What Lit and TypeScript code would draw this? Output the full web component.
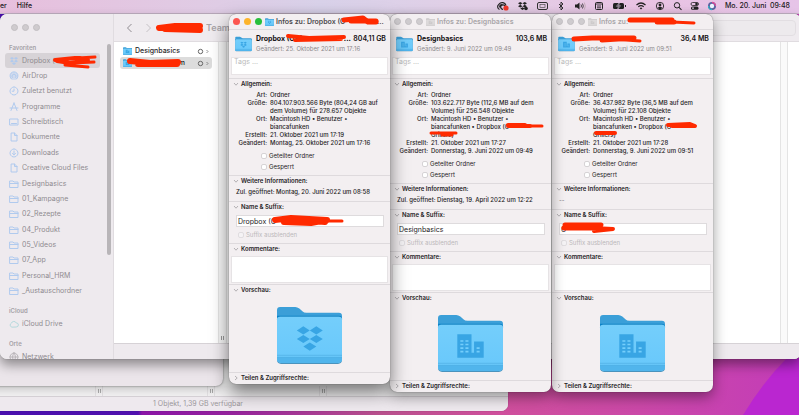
import { LitElement, html, svg, css, nothing } from "lit";
import { customElement, property } from "lit/decorators.js";
import { classMap } from "lit/directives/class-map.js";

const boxDiamonds = svg`<path d="M5 0L10 3L5 6L0 3ZM15 0L20 3L15 6L10 3ZM5 6.4L10 9.4L5 12.4L0 9.4ZM15 6.4L20 9.4L15 12.4L10 9.4ZM10 12L15 15L10 18L5 15Z"/>`;

const folderArt = (kind: string) => svg`
  <defs>
    <linearGradient id="front" x1="0" y1="0" x2="0" y2="1">
      <stop offset="0" stop-color="#74cefb"/><stop offset="1" stop-color="#68c8fb"/>
    </linearGradient>
  </defs>
  <path d="M1 14V4Q1 1 4 1H19Q21 1 23 2.500L26 5Q27.500 6.500 30 6.500H62Q65 6.500 65 9.500V14Z" fill="#3b9fd8"/>
  <path d="M1 16V9.500H62Q65 9.500 65 12V18Z" fill="#0b83c8"/>
  <path d="M1 13Q1 10.500 4 10.500H62Q65 10.500 65 13V53Q65 57 61 57H5Q1 57 1 53Z" fill="#4a93bd"/>
  <path d="M1 13Q1 10.500 4 10.500H62Q65 10.500 65 13V52Q65 56 61 56H5Q1 56 1 52Z" fill="url(#front)"/>
  <path d="M1 50.500H65V52Q65 56 61 56H5Q1 56 1 52Z" fill="#51b5ec"/>
  <path d="M1 48.500H65M1 50.500H65" stroke="#4aa9df" stroke-width=".6"/>
  ${kind === "dropbox"
    ? svg`<g transform="translate(20.500 20) scale(1.280 1.330)" fill="#38a5e4">${boxDiamonds}</g>`
    : svg`<path d="M20 20H34V38H36.500V27H46V43H20Z" fill="#38a5e4"/>
        <path d="M23 26.500H26M28 26.500H31M23 30H26M28 30H31M23 33.500H26M28 33.500H31M23 37H26M28 37H31M39 33.500H42M39 37H42" stroke="#74cefb" stroke-width="1.600"/>`}`;

const folder = (kind: string, cls: string) =>
  html`<svg class=${cls} viewBox="0 0 66 58" aria-hidden="true">${folderArt(kind)}</svg>`;

const chevron = (open: boolean) => html`<svg class="chev" viewBox="0 0 6 6" aria-hidden="true">
  <path d=${open ? "M1 2L3 4.200L5 2" : "M2 1L4.200 3L2 5"} fill="none" stroke="#a5a2a5" stroke-width=".8"/></svg>`;

interface Stroke { d: string; w: number; }
const scribble = (strokes: Stroke[]) => html`<svg class="ink" aria-hidden="true">
  ${strokes.map((s) => svg`<path d=${s.d} stroke-width=${s.w} fill="none" stroke="#ff2a00" stroke-linecap="round" stroke-linejoin="round"/>`)}</svg>`;

interface Info {
  id: string; kind: string; title: string; name: string; size: string; changed: string;
  bytes: string; place: string; created: string; changedLong: string; opened: string;
  field: string; active: boolean; ink: Stroke[];
}

const infos: Info[] = [
  {
    id: "a", kind: "dropbox", active: true, title: "Infos zu: Dropbox (O\u2003\u2003\u2003\u2003\u2002...", name: "Dropbox (OW\u2003\u2003\u2003\u2003\u2003\u2003...", size: "804,11 GB",
    changed: "25. Oktober 2021 um 17:16", bytes: "804.107.903.566 Byte (804,24 GB auf dem Volume) für 278.657 Objekte",
    place: "Macintosh HD • Benutzer • biancafunken", created: "21. Oktober 2021 um 17:19",
    changedLong: "Montag, 25. Oktober 2021 um 17:16", opened: "Montag, 20. Juni 2022 um 08:58", field: "Dropbox (O",
    ink: [
      { d: "M115 6L134 4L139 8L147 8", w: 5 }, { d: "M122 7L147 7", w: 5 },
      { d: "M59 22L80 24L115 23M66 26L112 25", w: 4 },
      { d: "M46 206L62 204L98 206L82 209L55 208M84 207L96 208", w: 6 }, { d: "M96 207H113", w: 3 },
    ],
  },
  {
    id: "b", kind: "office", active: false, title: "Infos zu: Designbasics", name: "Designbasics", size: "103,6 MB",
    changed: "9. Juni 2022 um 09:49", bytes: "103.622.717 Byte (112,6 MB auf dem Volume) für 256.548 Objekte",
    place: "Macintosh HD • Benutzer • biancafunken • Dropbox (O", created: "21. Oktober 2021 um 17:27",
    changedLong: "Donnerstag, 9. Juni 2022 um 09:49", opened: "Dienstag, 19. April 2022 um 12:22", field: "Designbasics",
    ink: [{ d: "M118 111L135 111L118 112L140 112", w: 4 }, { d: "M136 112H152", w: 3 }, { d: "M41 119H66M52 121H62", w: 3 }],
  },
  {
    id: "c", kind: "office", active: false, title: "Infos zu:", name: "", size: "36,4 MB",
    changed: "9. Juni 2022 um 09:51", bytes: "36.437.982 Byte (36,5 MB auf dem Volume) für 22.108 Objekte",
    place: "Macintosh HD • Benutzer • biancafunken • Dropbox (O", created: "21. Oktober 2021 um 17:28",
    changedLong: "Donnerstag, 9. Juni 2022 um 09:51", opened: "", field: "G",
    ink: [
      { d: "M78 6L92 6L120 6L105 8L122 8", w: 5 }, { d: "M120 8L142 9", w: 3 },
      { d: "M22 25L40 24L82 24L50 26", w: 5 }, { d: "M60 25L88 27", w: 3 },
      { d: "M116 111L138 110L143 112L120 112", w: 4 }, { d: "M44 119H63", w: 4 },
      { d: "M13 211L49 211L12 214L40 214", w: 5 }, { d: "M40 214L61 215L42 217", w: 4 },
    ],
  },
];

@customElement("info-panel")
export class InfoPanel extends LitElement {
  @property({ attribute: false }) info!: Info;

  static styles = css`
    :host { display: block; position: relative; box-sizing: border-box; width: 161px; padding-bottom: 1px; border-radius: 7px; overflow: hidden;
      background: #f3eff1; color: #242224; font: 6px/8px Inter, "Noto Sans", sans-serif; }
    * { box-sizing: border-box; }
    button, input, textarea { font: inherit; color: inherit; margin: 0; padding: 0; border: 0; background: none; }
    .bar { display: flex; align-items: center; height: 16px; padding: 0 6px 0 4px; border-bottom: 1px solid #dedadd; }
    .lights { display: flex; gap: 4px; margin-right: 3px; }
    .light { width: 7px; height: 7px; border-radius: 50%; background: #cfcccf; border: 1px solid #c2bfc2; }
    .active .light { border: 0; }
    .active .close { background: #fc5650; }
    .active .min { background: #fdb42b; }
    .active .zoom { background: #27bf3b; }
    .mini { width: 9px; height: 8px; margin-right: 2px; flex: none; }
    .dim .mini { filter: grayscale(1); opacity: .4; }
    h1 { margin: 0; font-size: 7px; font-weight: 600; white-space: nowrap; color: #4d4a4d; }
    .dim h1 { color: #a9a6a9; }
    .head { display: flex; gap: 4px; height: 27px; padding: 4px 4px 0 6px; }
    .thumb { width: 17px; height: 16px; margin-top: 2px; flex: none; }
    .heading { flex: 1; min-width: 0; line-height: 10px; }
    .row { display: flex; justify-content: space-between; height: 10px; font-size: 7px; font-weight: 700; color: #121012; white-space: nowrap; }
    .row .size { font-weight: 600; }
    .changed { color: #8b888b; white-space: nowrap; }
    .tags { display: block; width: calc(100% - 4px); height: 18px; margin: 0 2px 3px; padding: 0 2px 9px; background: #fff; border: 1px solid #e8e4e6; font-size: 7px; }
    ::placeholder { color: #bbb; opacity: 1; }
    section { border-top: 1px solid #dedadd; }
    .toggle { display: flex; align-items: center; gap: 2px; height: 10px; padding-left: 4px; font-weight: 600; }
    .chev { width: 6px; height: 6px; }
    .facts { display: grid; grid-template-columns: 38px 1fr; column-gap: 3px; margin: 2px 4px 3px 0; font-weight: 500; }
    .facts dt { text-align: right; }
    .facts dd { margin: 0; }
    .check { display: flex; align-items: center; gap: 2px; height: 11px; padding-left: 32px; }
    .check input { appearance: none; width: 6px; height: 6px; margin: 0; border: 1px solid #d6d3d5; border-radius: 2px; background: #fff; }
    .check.off { padding-left: 9px; color: #bbb8ba; }
    .check.off input { background: #f5f3f5; border-color: #e0dde0; }
    .general { padding-bottom: 3px; }
    .opened { margin: 0; padding: 2px 0 5px 7px; height: 15px; font-weight: 500; white-space: nowrap; }
    .none { color: #8b888b; }
    .field { display: block; width: 148px; height: 12px; margin: 3px 7px 2px; padding: 0 1px; background: #fff; border: 1px solid #dedbdd; font-size: 7px; }
    .name { padding-bottom: 3px; }
    .comment { display: block; width: calc(100% - 4px); height: 27px; margin: 2px 2px 1px; background: #fff; border: 1px solid #e6e3e5; resize: none; }
    .preview { height: 88px; }
    .big { display: block; width: 67px; height: 59px; margin: 11px auto 0; }
    .ink { position: absolute; inset: 0; width: 100%; height: 100%; pointer-events: none; }
  `;

  private head(label: string, open = true) {
    return html`<button class="toggle" aria-expanded=${open ? "true" : "false"}>${chevron(open)}${label}</button>`;
  }

  render() {
    const i = this.info;
    return html`
      <header class=${classMap({ bar: true, active: i.active, dim: !i.active })}>
        <div class="lights">
          <button class="light close" aria-label="Schließen"></button>
          <button class="light min" aria-label="Minimieren"></button>
          <button class="light zoom" aria-label="Zoomen"></button>
        </div>
        ${folder(i.kind, "mini")}
        <h1>${i.title}</h1>
      </header>
      <div class="head">
        ${folder(i.kind, "thumb")}
        <div class="heading">
          <div class="row"><span>${i.name}</span><span class="size">${i.size}</span></div>
          <div class="changed">Geändert: ${i.changed}</div>
        </div>
      </div>
      <input class="tags" aria-label="Tags" placeholder="Tags ..." />
      <section class="general">
        ${this.head("Allgemein:")}
        <dl class="facts">
          <dt>Art:</dt><dd>Ordner</dd>
          <dt>Größe:</dt><dd>${i.bytes}</dd>
          <dt>Ort:</dt><dd>${i.place}${i.active ? nothing : html`<br />Grillers)`}</dd>
          <dt>Erstellt:</dt><dd>${i.created}</dd>
          <dt>Geändert:</dt><dd>${i.changedLong}</dd>
        </dl>
        <label class="check"><input type="checkbox" />Geteilter Ordner</label>
        <label class="check"><input type="checkbox" />Gesperrt</label>
      </section>
      <section>
        ${this.head("Weitere Informationen:")}
        <p class=${classMap({ opened: true, none: !i.opened })}>${i.opened ? `Zul. geöffnet: ${i.opened}` : "--"}</p>
      </section>
      <section class="name">
        ${this.head("Name & Suffix:")}
        <input class="field" aria-label="Name" .value=${i.field} />
        <label class="check off"><input type="checkbox" disabled />Suffix ausblenden</label>
      </section>
      <section>
        ${this.head("Kommentare:")}
        <textarea class="comment" aria-label="Kommentare"></textarea>
      </section>
      <section class="preview">${this.head("Vorschau:")}${folder(i.kind, "big")}</section>
      <section>${this.head("Teilen & Zugriffsrechte:", false)}</section>
      ${scribble(i.ink)}`;
  }
}

const line = (d: string) => svg`<path d=${d} fill="none" stroke="currentColor" stroke-width="1" stroke-linejoin="round" stroke-linecap="round"/>`;
const glyphs: Record<string, unknown> = {
  dropbox: svg`<g transform="translate(1 1) scale(.400 .440)" fill="currentColor">${boxDiamonds}</g>`,
  airdrop: svg`<circle cx="5" cy="5" r="4" fill="currentColor" opacity=".45"/>${line("M2.500 8A4 4 0 1 1 7.500 8M3.500 6.500A2 2 0 1 1 6.500 6.500")}`,
  clock: line("M5 1A4 4 0 1 1 4.990 1M5 3V5.200H3.200"),
  apps: line("M5 1L2 8.500M5 1L8 8.500M1 6H9"),
  desktop: line("M1 2H9V8H1ZM2.500 6.500H7.500"),
  doc: line("M2.500 1H5.500L8 3.500V9H2.500ZM5.500 1V3.500H8"),
  down: line("M5 1A4 4 0 1 1 4.990 1M5 3V6.800M3.500 5.400L5 6.900L6.500 5.400"),
  folder: line("M1 2H4L5 3H9V8.500H1ZM1 4.500H9"),
  cloud: line("M2.500 8A2 2 0 0 1 2.300 4.300A2.700 2.700 0 0 1 7.300 4A2 2 0 0 1 7.500 8Z"),
  globe: line("M5 1A4 4 0 1 1 4.990 1M1 5H9M5 1Q2 5 5 9Q8 5 5 1"),
};

const favourites: [string, string][] = [
  ["dropbox", "Dropbox (\u2003\u2003\u2003\u2003\u2002..."], ["airdrop", "AirDrop"], ["clock", "Zuletzt benutzt"], ["apps", "Programme"],
  ["desktop", "Schreibtisch"], ["doc", "Dokumente"], ["down", "Downloads"], ["doc", "Creative Cloud Files"],
  ["folder", "Designbasics"], ["folder", "01_Kampagne"], ["folder", "02_Rezepte"], ["folder", "04_Produkt"],
  ["folder", "05_Videos"], ["folder", "07_App"], ["folder", "Personal_HRM"], ["folder", "_Austauschordner"],
];

const place = ([icon, label]: [string, string], cls = "") => html`
  <a class="place ${cls}" href="#"><svg class="glyph ${icon}" viewBox="0 0 10 10" aria-hidden="true">${glyphs[icon]}</svg>${label}</a>`;

@customElement("finder-window")
export class FinderWindow extends LitElement {
  static styles = css`
    :host { display: flex; position: relative; overflow: hidden; border-radius: 7px; background: #fff; color: #8f8b90;
      font: 7px/10px Inter, "Noto Sans", sans-serif; }
    * { box-sizing: border-box; }
    .side { flex: none; width: 114px; padding: 10px 5px 0; background: #eeeaee; border-right: 1px solid #e0dce0; overflow: hidden; position: relative; }
    .lights { display: flex; gap: 4px; padding-left: 6px; height: 7px; }
    .light { width: 7px; height: 7px; padding: 0; border-radius: 50%; background: #cfcbce; border: 1px solid #c2bfc2; }
    h2 { margin: 0; padding-left: 4px; font-size: 6px; line-height: 10px; font-weight: 600; color: #a5a1a6; }
    .fav { margin-top: 12px; }
    .list { display: grid; height: 246px; grid-auto-rows: 1fr; }
    .place { display: flex; align-items: center; gap: 3px; padding-left: 4px; height: 15px; color: inherit; text-decoration: none; white-space: nowrap; border-radius: 3px; }
    .place.on { background: #d7d3d7; width: 95px; }
    .glyph { width: 10px; height: 10px; color: #b0caee; flex: none; }
    .glyph.cloud { margin: 0; color: #b4d8dc; }
    .glyph.globe { color: #b8b4b8; }
    h2.cloud { margin-top: 7px; }
    .orte { margin-top: 8px; }
    .thumb { position: absolute; right: 2px; top: 30px; width: 4px; height: 211px; border-radius: 2px; background: #b8b5b8; }
    .main { flex: 1; min-width: 0; display: flex; flex-direction: column; }
    .tools { display: flex; align-items: center; gap: 12px; height: 28px; padding: 0 5px 0 12px; background: #efebef; border-bottom: 1px solid #e0dce0; font-size: 9px; }
    .nav { padding: 0; border: 0; background: none; color: #aaa6aa; height: 10px; }
    .nav svg { display: block; width: 7px; height: 10px; }
    .title { margin-left: 42px; font-weight: 600; color: #a8a4a8; }
    .search { margin-left: auto; width: 100px; height: 16px; border: 1px solid #e2dee2; border-radius: 4px; background: #edeaed; }
    .cols { flex: 1; display: flex; color: #2a282a; font-size: 7px; }
    .col { width: 105px; padding: 3px 6px; border-right: 1px solid #e4e4e4; font-weight: 500; }
    .grip { display: flex; align-items: flex-end; justify-content: center; gap: 1px; width: 8px; padding-bottom: 3px; background: #f6f6f6; border-right: 1px solid #e4e4e4; }
    .grip i { width: 1px; height: 4px; background: #999; }
    .last { margin-left: auto; margin-right: 13px; border-left: 1px solid #e4e4e4; background: #fafafa; }
    .item { display: flex; align-items: center; gap: 3px; height: 12px; padding: 0 3px; border-radius: 3px; color: inherit; text-decoration: none; }
    .item.on { background: #dcdcdc; }
    .item .tiny { width: 9px; height: 8px; }
    .item .more { margin-left: auto; width: 12px; height: 7px; }
    .foot { height: 16px; background: #eeeaee; border-top: 1px solid #d6d2d6; }
    .ink { position: absolute; inset: 0; width: 100%; height: 100%; pointer-events: none; }
  `;

  private item(label: string, cls = "") {
    return html`<a class="item ${cls}" href="#">${folder("office", "tiny")}${label}
      <svg class="more" viewBox="0 0 12 7" aria-hidden="true" fill="none" stroke="#666">
        <circle cx="3.500" cy="3.500" r="2.200"/><path d="M9.500 2L11 3.500L9.500 5" stroke-width=".7"/></svg></a>`;
  }

  render() {
    return html`
      <nav class="side">
        <div class="lights">
          <button class="light" aria-label="Schließen"></button>
          <button class="light" aria-label="Minimieren"></button>
          <button class="light" aria-label="Zoomen"></button>
        </div>
        <h2 class="fav">Favoriten</h2>
        <div class="list">${favourites.map((f, n) => place(f, n === 0 ? "on" : ""))}</div>
        <h2 class="cloud">iCloud</h2>
        ${place(["cloud", "iCloud Drive"])}
        <h2 class="orte">Orte</h2>
        ${place(["globe", "Netzwerk"])}
        <div class="thumb"></div>
      </nav>
      <div class="main">
        <div class="tools">
          <button class="nav" aria-label="Zurück"><svg viewBox="0 0 7 10"><path d="M5.500 1L1.500 5L5.500 9" fill="none" stroke="#8f8b90"/></svg></button>
          <button class="nav" aria-label="Vorwärts"><svg viewBox="0 0 7 10"><path d="M1.500 1L5.500 5L1.500 9" fill="none" stroke="#c5c1c5"/></svg></button>
          <span class="title">Team</span>
          <input class="search" aria-label="Suchen" />
        </div>
        <div class="cols">
          <div class="col">${this.item("Designbasics")}${this.item("G\u2003\u2003\u2003\u2003\u2003\u2002m", "on")}</div>
          <div class="grip"><i></i><i></i></div>
          <div class="grip last"></div>
        </div>
        <div class="foot"></div>
      </div>
      ${scribble([
        { d: "M55 46L75 44L80 44M57 47L70 49L88 46", w: 4 }, { d: "M78 44L95 43", w: 3 }, { d: "M65 51L88 53M72 49L94 48", w: 3 },
        { d: "M159 14L175 12L200 12L165 15L200 16", w: 6 },
        { d: "M130 47L150 49L178 48M138 50H177", w: 6 },
      ])}`;
  }
}

const status: [string, number, unknown][] = [
  ["Creative Cloud", 13, svg`<path d="M3.500 8.500A3 3 0 0 1 3 3.200A4 4 0 0 1 10 4.500M4 6.500A1.700 1.700 0 0 1 7 4.500M7 8.300A2.200 2.200 0 1 1 9 5.500" fill="none" stroke="#222" stroke-width="1.200"/><circle cx="10" cy="7" r="2.600" fill="#f0382c"/>`],
  ["Dropbox", 12, svg`<g transform="translate(1 1) scale(.450 .440)" fill="#222">${boxDiamonds}</g><circle cx="9" cy="7.500" r="1.800" fill="#222"/>`],
  ["Bildschirm", 11, svg`<rect x=".500" y="1.500" width="10" height="7" rx="1.500" fill="none" stroke="#333"/><rect x="3" y="3.500" width="5" height="3" fill="none" stroke="#555" stroke-width=".7"/>`],
  ["Bluetooth", 10, svg`<path d="M3 3L7 7L5 9V1L7 3L3 7" fill="none" stroke="#222" stroke-width=".9"/>`],
  ["Ton", 12, svg`<path d="M1 3.500H3L5.500 1.500V8.500L3 6.500H1Z" fill="#222"/><path d="M7 3.500Q8 5 7 6.500M8.500 2.500Q10 5 8.500 7.500" fill="none" stroke="#222" stroke-width=".8"/><path d="M10.300 1.500Q12.300 5 10.300 8.500" fill="none" stroke="#a99" stroke-width=".6"/>`],
  ["Kalender", 10, svg`<rect x="1.500" y="1.500" width="7" height="7" rx="1" fill="none" stroke="#222"/><path d="M1.500 3H8.500M3 5H7M3 6.800H7" stroke="#222" stroke-width=".9"/>`],
  ["Batterie", 15, svg`<rect x="1" y="2" width="11" height="6" rx="1.500" fill="#222"/><path d="M13.500 4V6" stroke="#222"/><path d="M7.500 1.500L4.500 5.300H6.500L5.500 8.500L8.500 4.700H6.500Z" fill="#222" stroke="#e3cce6" stroke-width=".6"/>`],
  ["WLAN", 12, svg`<path d="M1.500 4Q6 0 10.500 4M3.300 5.800Q6 3.500 8.700 5.800" fill="none" stroke="#222" stroke-width="1.200"/><path d="M4.700 7.200Q6 6 7.300 7.200L6 8.600Z" fill="#222"/>`],
  ["Benutzer", 10, svg`<circle cx="5" cy="5" r="3.700" fill="none" stroke="#222" stroke-width=".9"/><circle cx="5" cy="4" r="1.400" fill="#222"/><path d="M2.500 7Q5 4.700 7.500 7L5 8.500Z" fill="#222"/>`],
  ["Suche", 9, svg`<circle cx="4" cy="4.300" r="2.700" fill="none" stroke="#222"/><path d="M6 6.300L8.500 8.800" stroke="#222" stroke-width="1.100"/>`],
  ["Kontrollzentrum", 9, svg`<rect x="1" y="1.500" width="7.500" height="3" rx="1.500" fill="none" stroke="#222" stroke-width=".8"/><rect x="1" y="5.500" width="7.500" height="3.200" rx="1.500" fill="#222"/><circle cx="6.500" cy="3" r="1.300" fill="#222"/><circle cx="3" cy="7.100" r=".9" fill="#e5cbe7"/>`],
  ["Siri", 10, svg`<circle cx="5" cy="5" r="4" fill="#5a62a0"/><path d="M5 1.500A3.500 3.500 0 0 1 8.500 5" fill="none" stroke="#e04a98" stroke-width="1.300"/><path d="M1.500 5A3.500 3.500 0 0 0 5 8.500" fill="none" stroke="#30b8c8" stroke-width="1.300"/><circle cx="5" cy="5" r="2.200" fill="#eef4ff"/>`],
];

@customElement("app-root")
export class AppRoot extends LitElement {
  static styles = css`
    :host { display: block; position: relative; height: 100vh; overflow: hidden; font: 7px/10px Inter, "Noto Sans", sans-serif;
      background: linear-gradient(90deg, #4a0fae 0, #5010ae 138px, #8a14a6 142px, #94229c 230px, #b8508c 380px, #cf4f9c 500px, #cb48a8 640px, #c33cb8 799px); }
    * { box-sizing: border-box; }
    .wave { position: absolute; right: 0; bottom: 0; width: 56px; height: 57px; }
    .menubar { position: relative; display: flex; align-items: center; gap: 8px; height: 14px; padding: 0 9px 1px 0; color: #1c191c;
      background: linear-gradient(90deg, #e7bfdd 0, #e0cbe4 200px, #d9d2ea 320px, #e2cfe6 480px, #e9c3e3 640px, #e6c4e8 799px); border-bottom: 1px solid #c9b8cb; }
    .menu, .icon { padding: 0; border: 0; background: none; font: inherit; color: inherit; font-weight: 500; height: 10px; white-space: pre; }
    .menu + .menu { margin-left: 2px; }
    .icon svg { display: block; height: 10px; }
    .gap { flex: 1; }
    .win { position: absolute; }
    .rear { left: -20px; width: 528px; top: 340px; bottom: 4px; display: flex; flex-direction: column; justify-content: flex-end; border-radius: 7px; background: #f3f3f3; overflow: hidden; box-shadow: 0 0 1px #0006; }
    .scroll { display: flex; gap: 104px; height: 10px; padding-left: 115px; background: #f1f0f1; }
    .grip { display: flex; align-items: center; justify-content: center; gap: 1px; width: 8px; border: 1px solid #e2e0e2; border-width: 0 1px; }
    .grip i { width: 1px; height: 4px; background: #aaa; }
    .info { height: 15px; line-height: 14px; border-top: 1px solid #d5d0d5; background: #eee9ee; padding-left: 173px; color: #9a969b; }
    .mid { left: -20px; width: 243px; top: 330px; bottom: 29px; border-radius: 7px; background: #ebe5ea; box-shadow: 0 0 2px #0008, 0 3px 8px #0003; }
    .finder { left: 0; right: -2px; top: 14px; bottom: 56px; box-shadow: 0 0 1px #0008, 0 6px 12px #0006; }
    .a, .b, .c { top: 14px; box-shadow: 0 0 1px #0009, 0 5px 14px #0006; }
    .a { left: 229px; box-shadow: 0 0 1px #0009, 0 8px 18px #0008; }
    .b { left: 390px; }
    .c { left: 552px; }
  `;

  render() {
    return html`
      <svg class="wave" viewBox="0 0 56 57" aria-hidden="true"><path d="M0 57Q20 24 44 0H56V57Z" fill="#ba26d0"/></svg>
      <header class="menubar">
        <button class="menu">er</button><button class="menu">Hilfe</button>
        <span class="gap"></span>
        ${status.map(([label, w, art]) => html`<button class="icon" aria-label=${label}><svg width=${w} viewBox="0 0 ${w} 10">${art}</svg></button>`)}
        <button class="menu">Mo. 20. Juni  09:48</button>
      </header>
      <div class="win rear">
        <div class="scroll"><div class="grip"><i></i><i></i></div><div class="grip"><i></i><i></i></div><div class="grip"><i></i><i></i></div></div>
        <div class="info">1 Objekt, 1,39 GB verfügbar</div>
      </div>
      <div class="win mid"></div>
      <finder-window class="win finder"></finder-window>
      ${[...infos].reverse().map((i) => html`<info-panel class="win ${i.id}" .info=${i}></info-panel>`)}`;
  }
}
